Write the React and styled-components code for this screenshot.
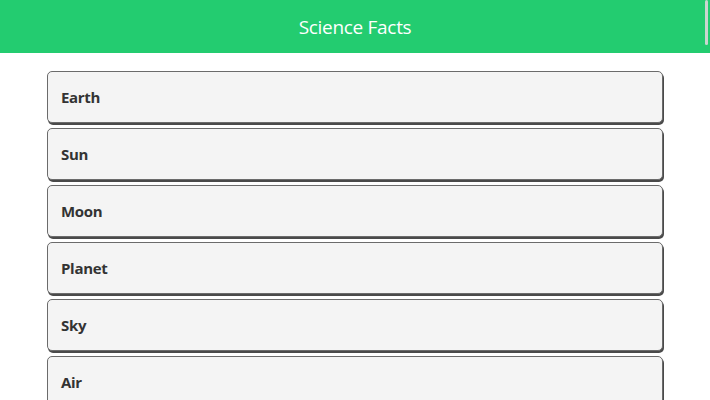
import React from 'react'
import styled, { createGlobalStyle } from 'styled-components'

const GlobalStyle = createGlobalStyle`
  body {
    margin: 0;
    background: #ffffff;
    font-family: 'Open Sans', 'Noto Sans', sans-serif;
    overflow: hidden;
  }
`

const Header = styled.header`
  position: relative;
  height: 53px;
  background-color: #23cc70;
  display: flex;
  align-items: center;
  justify-content: center;
  color: #ffffff;
  font-size: 19px;
  letter-spacing: -0.3px;
`

const ScrollThumb = styled.div`
  position: absolute;
  top: 0;
  right: 2px;
  width: 3px;
  height: 45px;
  border-radius: 2px;
  background-color: #c9d6cf;
`

const List = styled.ul`
  list-style: none;
  margin: 18px 47px 0;
  padding: 0;
  display: flex;
  flex-direction: column;
  gap: 5px;
`

const Item = styled.li`
  height: 52px;
  flex-shrink: 0;
  box-sizing: border-box;
  display: flex;
  align-items: center;
  padding-left: 13px;
  background-color: #f4f4f4;
  border: 1px solid #6b6b6b;
  border-radius: 5px;
  box-shadow: 1px 2px 0 #4a4a4a;
  color: #333333;
  font-size: 15px;
  font-weight: 700;
  letter-spacing: -0.3px;
`

const topics = ['Earth', 'Sun', 'Moon', 'Planet', 'Sky', 'Air']

const App = () => {
  return (
    <>
      <GlobalStyle />
      <Header>
        Science Facts
        <ScrollThumb />
      </Header>
      <List>
        {topics.map((t) => (
          <Item key={t}>{t}</Item>
        ))}
      </List>
    </>
  )
}

export default App
